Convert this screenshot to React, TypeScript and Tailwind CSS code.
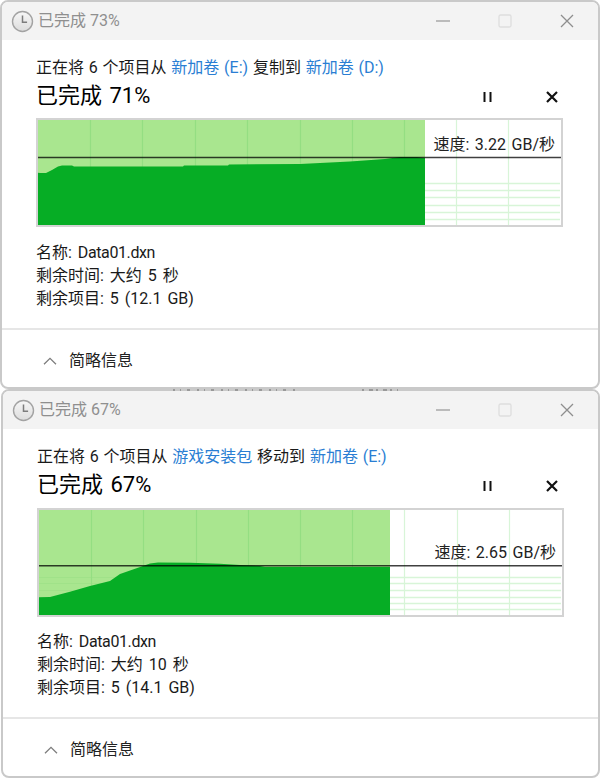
import React from "react";

type ChartProps = {
  fillEnd: number;
  lineY: number;
  points: string;
  gridX: number[];
  gridY: number[];
  height: number;
};

const Clock = () => (
  <svg width="23" height="23" viewBox="0 0 23 23" className="shrink-0">
    <defs>
      <linearGradient id="clockFace" x1="0" y1="0" x2="0" y2="1">
        <stop offset="0" stopColor="#f7f7f7" />
        <stop offset="1" stopColor="#dcdcdc" />
      </linearGradient>
    </defs>
    <circle cx="11.5" cy="11.5" r="10" fill="url(#clockFace)" stroke="#a3a3a3" strokeWidth="1.4" />
    <path d="M11.5 5.5v6.8h4.6" fill="none" stroke="#7c7c7c" strokeWidth="1.5" />
  </svg>
);

const TitleBar = ({ title }: { title: string }) => (
  <div className="flex h-[38px] shrink-0 items-center bg-[#f3f3f3] pl-[9px] pr-[24px]">
    <Clock />
    <span className="ml-[4px] text-[16px] text-[#8f8f8f]">{title}</span>
    <div className="ml-auto flex items-center gap-[48px]">
      <svg width="14" height="14" viewBox="0 0 14 14">
        <path d="M0 7h14" stroke="#a8a8a8" strokeWidth="1.4" />
      </svg>
      <svg width="14" height="14" viewBox="0 0 14 14">
        <rect x="1" y="1" width="12" height="12" rx="1.5" fill="none" stroke="#dedede" strokeWidth="1.3" />
      </svg>
      <svg width="14" height="14" viewBox="0 0 14 14">
        <path d="M1 1l12 12M13 1L1 13" stroke="#8e8e8e" strokeWidth="1.3" />
      </svg>
    </div>
  </div>
);

const SpeedChart = ({ fillEnd, lineY, points, gridX, gridY, height }: ChartProps) => (
  <svg width="523" height={height} className="block">
    <rect x="0" y="0" width="523" height={height} fill="#ffffff" />
    {gridY.map((y) => (
      <path key={y} d={`M0 ${y + 0.5}H522`} stroke="#d8f5d8" strokeWidth="1.4" />
    ))}
    {gridX.map((x) => (
      <path key={x} d={`M${x + 0.5} 0V${height}`} stroke="#d8f5d8" strokeWidth="1.2" />
    ))}
    <rect x="0" y="0" width={fillEnd} height={height} fill="#a9e68f" />
    {gridY.map((y) => (
      <path key={y} d={`M0 ${y + 0.5}H${fillEnd}`} stroke="#a0e289" strokeWidth="1.2" />
    ))}
    {gridX
      .filter((x) => x < fillEnd)
      .map((x) => (
        <path key={x} d={`M${x + 0.5} 0V${height}`} stroke="#94de82" strokeWidth="1.2" />
      ))}
    <polygon points={points} fill="#06ad25" />
    <path d={`M0 ${lineY}H523`} stroke="#000000" strokeOpacity="0.75" strokeWidth="1.4" />
  </svg>
);

type WindowProps = {
  title: string;
  from: string;
  verb: string;
  to: string;
  percent: string;
  speed: string;
  speedTop: string;
  time: string;
  left: string;
  chart: ChartProps;
  outerClass: string;
  chartGap: string;
  detailGap: string;
};

const CopyWindow = ({
  title,
  from,
  verb,
  to,
  percent,
  speed,
  speedTop,
  time,
  left,
  chart,
  outerClass,
  chartGap,
  detailGap,
}: WindowProps) => (
  <section
    className={`flex h-[389px] flex-col overflow-hidden rounded-[8px] border-2 border-[#c9c9c9] bg-white ${outerClass}`}
  >
    <TitleBar title={title} />
    <div className="flex-1 pl-[34px] pr-[36px] text-[#1a1a1a]">
      <p className="mt-[17px] text-[16px] leading-[22px] [word-spacing:0.8px]">
        正在将 6 个项目从 <span className="text-[#2a7ed3]">{from}</span> {verb}{" "}
        <span className="text-[#2a7ed3]">{to}</span>
      </p>
      <div className="flex h-[33px] items-center">
        <span className="text-[22px] text-black [word-spacing:2px]">已完成 {percent}</span>
        <div className="ml-auto flex items-center gap-[53px] pr-[4px] pt-[2px]">
          <svg width="11" height="12" viewBox="0 0 11 12">
            <path d="M2.5 1v10M8.5 1v10" stroke="#111111" strokeWidth="2" />
          </svg>
          <svg width="12" height="12" viewBox="0 0 12 12">
            <path d="M1 1l10 10M11 1L1 11" stroke="#111111" strokeWidth="2.2" />
          </svg>
        </div>
      </div>
      <div className={`relative w-[527px] border-2 border-[#d3d3d3] ${chartGap}`}>
        <SpeedChart {...chart} />
        <span
          className={`absolute right-[6px] whitespace-nowrap text-[16px] leading-[20px] text-[#222] [word-spacing:1.5px] ${speedTop}`}
        >
          速度: {speed}
        </span>
      </div>
      <div className={`text-[16px] leading-[23px] [word-spacing:2px] ${detailGap}`}>
        <p>
          名称: <span className="tracking-[-0.4px]">Data01.dxn</span>
        </p>
        <p>剩余时间: 大约 {time}</p>
        <p>剩余项目: {left}</p>
      </div>
    </div>
    <div className="flex h-[59px] shrink-0 items-center border-t-2 border-[#e6e6e6] pl-[41px] pt-[5px]">
      <svg width="14" height="8" viewBox="0 0 14 8">
        <path d="M1 7.3l6-6 6 6" fill="none" stroke="#7d7d7d" strokeWidth="1.3" />
      </svg>
      <span className="ml-[12px] text-[16px] text-[#222]">简略信息</span>
    </div>
  </section>
);

export default function App() {
  return (
    <main
      className="relative h-[778px] w-[600px] overflow-hidden bg-white"
      style={{ fontFamily: 'Roboto, "Noto Sans CJK SC", sans-serif' }}
    >
      <CopyWindow
        title="已完成 73%"
        from="新加卷 (E:)"
        verb="复制到"
        to="新加卷 (D:)"
        percent="71%"
        speed="3.22 GB/秒"
        speedTop="top-[15px]"
        time="5 秒"
        left="5 (12.1 GB)"
        outerClass=""
        chartGap="mt-[6px]"
        detailGap="mt-[14px]"
        chart={{
          fillEnd: 387,
          lineY: 37.5,
          height: 105,
          gridX: [52, 104, 157, 209, 262, 314, 366, 418, 470],
          gridY: [63, 70, 77, 85, 92, 99],
          points:
            "0,52.7 2,53 8,53 14,50 20,46.5 24,45.5 34,45.5 36,46.5 145,46.5 146,45.5 190,45.5 191,44.5 262,44 312,41.5 347,39 362,37 379,37 387,38 387,105 0,105",
        }}
      />
      <CopyWindow
        title="已完成 67%"
        from="游戏安装包"
        verb="移动到"
        to="新加卷 (E:)"
        percent="67%"
        speed="2.65 GB/秒"
        speedTop="top-[33px]"
        time="10 秒"
        left="5 (14.1 GB)"
        outerClass="ml-px"
        chartGap="mt-[7px]"
        detailGap="mt-[13px]"
        chart={{
          fillEnd: 351,
          lineY: 55.7,
          height: 105,
          gridX: [52, 104, 157, 209, 261, 313, 365, 418, 470],
          gridY: [67, 73, 80, 87, 93, 99],
          points:
            "0,87.3 11,87 31,81.7 51,76 71,71 81,64 104,56 111,53.5 119,52.5 151,52.8 181,53.7 201,55 221,56 226,57 351,57 351,105 0,105",
        }}
      />
      {/* bits of a window behind, showing in the seam between the two dialogs */}
      <svg width="600" height="2" className="absolute left-0 top-[389px]">
        <path d="M173 1H295" stroke="#555555" strokeOpacity="0.55" strokeWidth="1.4" strokeDasharray="2 5 1 6 3 7" />
        <path d="M362 1H398" stroke="#555555" strokeOpacity="0.55" strokeWidth="1.4" strokeDasharray="2 5 4 3" />
      </svg>
    </main>
  );
}
